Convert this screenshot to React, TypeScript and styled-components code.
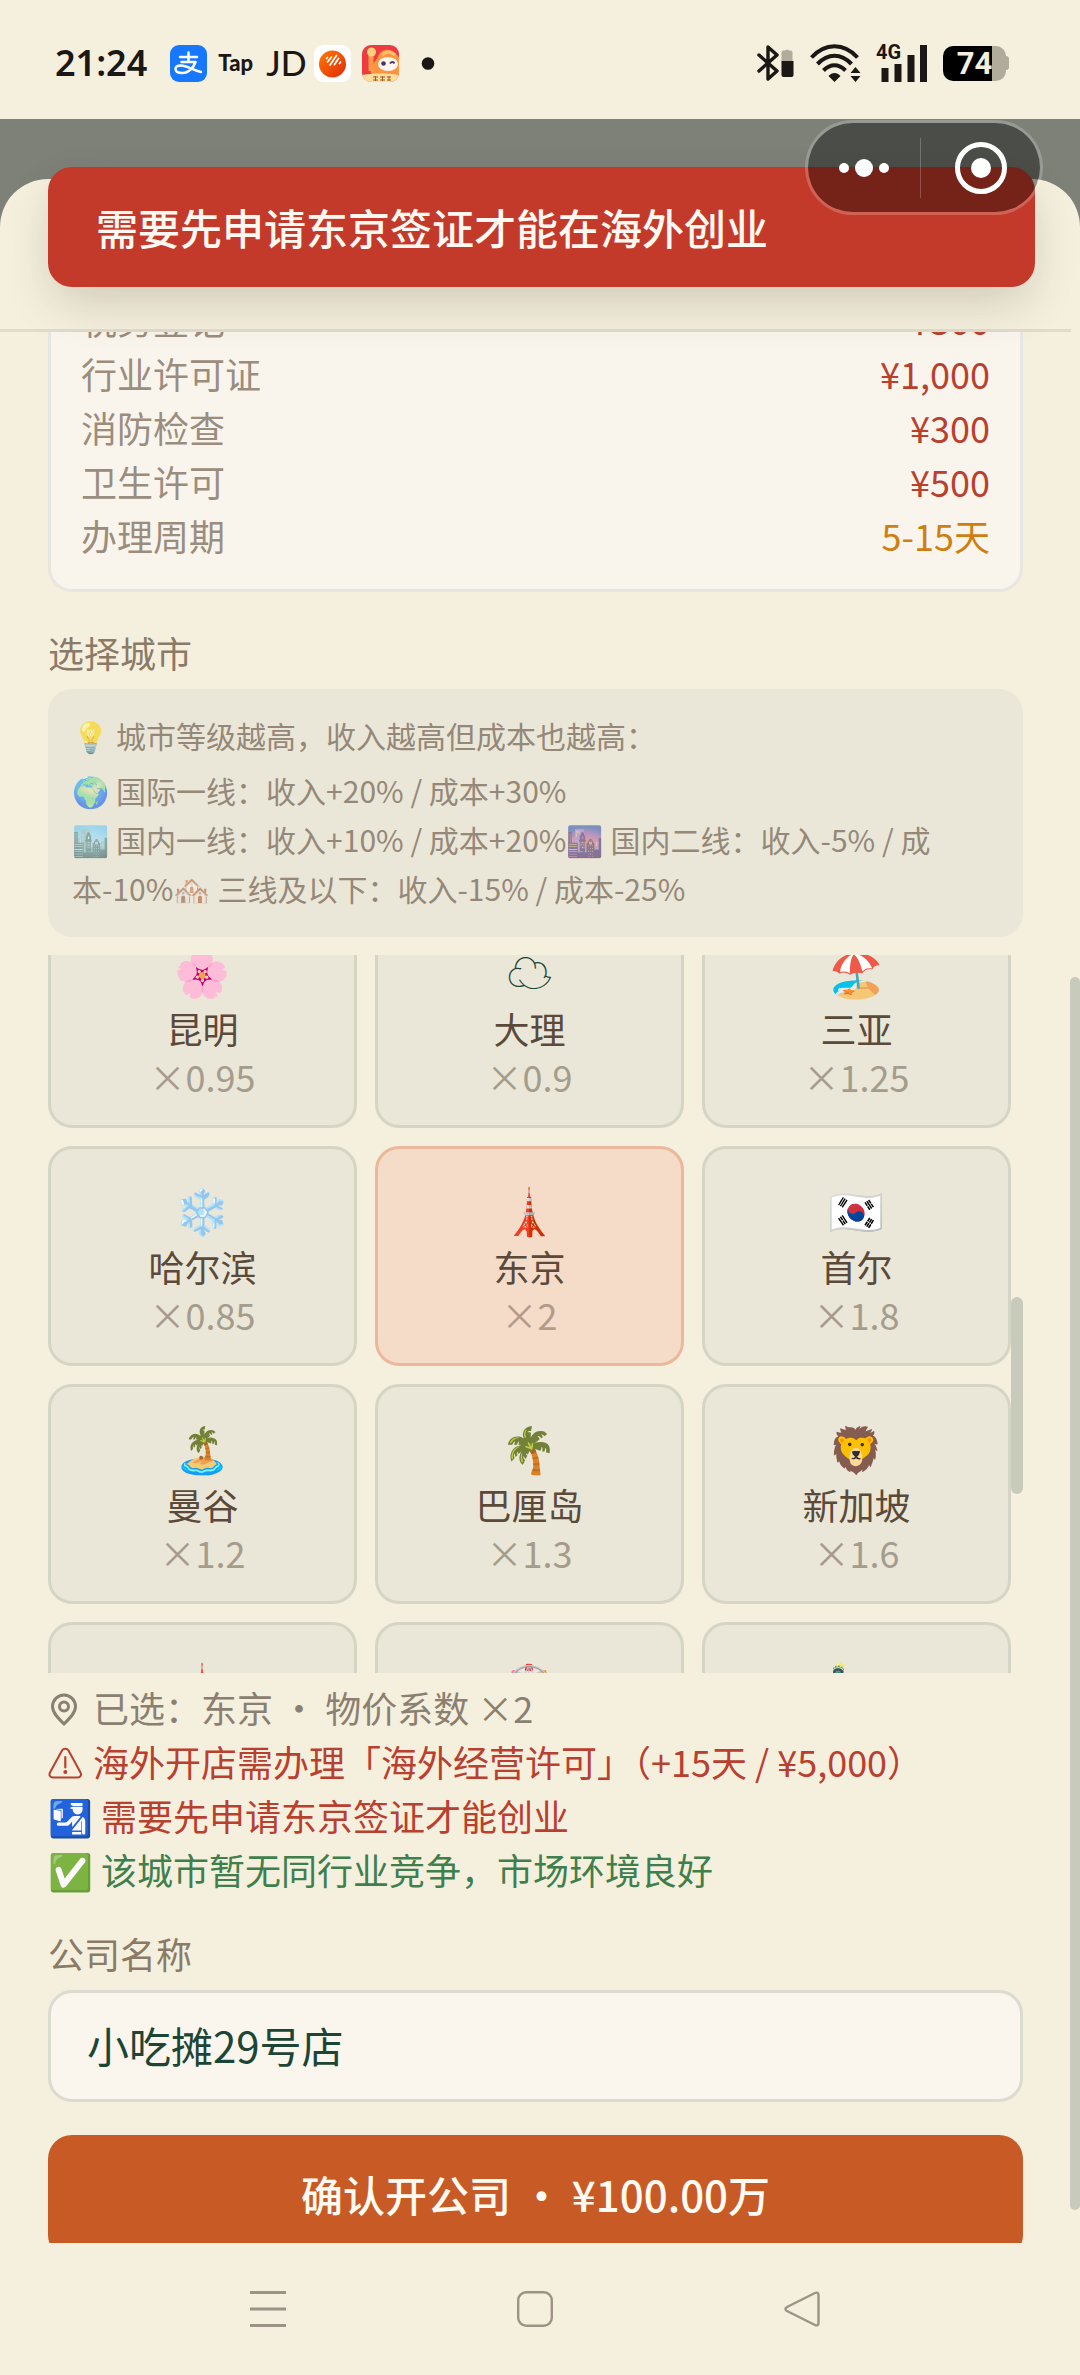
import React, { useState } from "react";
import styled, { createGlobalStyle } from "styled-components";

const Global = createGlobalStyle`
  *, *::before, *::after { box-sizing: border-box; }
  body {
    margin: 0;
    background: #f5efde;
    font-family: "Noto Sans CJK SC", "Noto Color Emoji", sans-serif;
    font-size: 36px;
  }
  button, input { font: inherit; }
`;

const Screen = styled.div`
  display: flex;
  flex-direction: column;
  height: 100vh;
  overflow: hidden;
`;

/* ---------- system bars ---------- */

const StatusBar = styled.header`
  flex: none;
  display: flex;
  align-items: center;
  justify-content: space-between;
  height: 119px;
  padding: 7px 71px 0 55px;
  color: #1a1714;
`;

const StatusGroup = styled.div<{ $gap: number }>`
  display: flex;
  align-items: center;
  gap: ${(p) => p.$gap}px;
`;

const Clock = styled.time`
  margin-right: 12px;
  font-family: "Noto Sans", sans-serif;
  font-weight: 600;
  font-size: 36px;
  line-height: 40px;
`;

const TapMark = styled.span`
  width: 37px;
  font-family: Lato, sans-serif;
  font-weight: 900;
  font-size: 22px;
  line-height: 36px;
`;

const JdMark = styled.span`
  width: 37px;
  font-family: Lato, sans-serif;
  font-weight: 500;
  font-size: 34px;
  line-height: 36px;
`;

const NavBar = styled.nav`
  flex: none;
  display: flex;
  align-items: center;
  justify-content: space-around;
  height: 132px;
  padding: 0 145px 0 134px;
`;

const NavButton = styled.button`
  display: flex;
  padding: 10px;
  border: 0;
  background: none;
  color: #9c9285;
`;

/* ---------- sheet ---------- */

const Stage = styled.div`
  position: relative;
  flex: 1;
  min-height: 0;
  display: flex;
  flex-direction: column;
  padding-top: 60px;
  background: #7e8178;
`;

const Sheet = styled.main`
  position: relative;
  flex: 1;
  min-height: 0;
  display: flex;
  flex-direction: column;
  border-radius: 48px 48px 0 0;
  background: #f5efde;
  overflow: hidden;
`;

const SheetHeader = styled.div`
  flex: none;
  height: 153px;
  margin-right: 9px;
  border-bottom: 3px solid #dfdccd;
`;

const SheetBody = styled.div`
  flex: 1;
  min-height: 0;
  padding: 0 57px 0 48px;
  overflow: hidden;
`;

const Thumb = styled.div<{ $top: number; $height: number; $width: number }>`
  position: absolute;
  right: 0;
  top: ${(p) => p.$top}px;
  width: ${(p) => p.$width}px;
  height: ${(p) => p.$height}px;
  border-radius: 6px;
  background: #c8cbbc;
`;

const Toast = styled.div`
  position: absolute;
  top: 48px;
  left: 48px;
  right: 45px;
  padding: 30px 48px;
  border-radius: 24px;
  background: #c33a2b;
  box-shadow: 0 20px 48px -6px rgba(60, 50, 30, 0.2);
  color: #fff8f0;
  font-size: 42px;
  font-weight: 500;
  line-height: 60px;
`;

const Capsule = styled.div`
  position: absolute;
  top: 1px;
  right: 37px;
  display: flex;
  align-items: center;
  width: 238px;
  height: 95px;
  border: 3px solid rgba(255, 255, 255, 0.2);
  border-radius: 48px;
  background: rgba(0, 0, 0, 0.4);
  background-clip: padding-box;
`;

const CapsuleButton = styled.button<{ $width: number }>`
  flex: none;
  display: flex;
  align-items: center;
  justify-content: center;
  width: ${(p) => p.$width}px;
  height: 100%;
  padding: 0;
  border: 0;
  background: none;
  color: #ffffff;
`;

const CapsuleRule = styled.span`
  width: 3px;
  height: 60px;
  background: rgba(255, 255, 255, 0.22);
`;

/* ---------- fees ---------- */

const FeeCard = styled.dl`
  margin: -40px 0 36px;
  padding: 0 30px 27px;
  border: 3px solid #e7e6e0;
  border-top: 0;
  border-radius: 0 0 24px 24px;
  background: #faf5ec;
`;

const FeeRow = styled.div`
  display: flex;
  justify-content: space-between;
  line-height: 54px;
`;

const FeeName = styled.dt`
  color: #9b8d7e;
`;

const FeeValue = styled.dd<{ $warn?: boolean }>`
  margin: 0;
  color: ${(p) => (p.$warn ? "#cf7f12" : "#b9402f")};
`;

/* ---------- city picker ---------- */

const Label = styled.label`
  display: block;
  margin-bottom: 12px;
  color: #8a7a66;
  line-height: 49px;
`;

const Heading = styled(Label).attrs({ as: "h2" })`
  margin-top: 0;
  font-size: 36px;
  font-weight: 400;
`;

const Info = styled.section`
  margin-bottom: 18px;
  padding: 22px 24px 24px;
  border-radius: 24px;
  background: #eae7d8;
  color: #968878;
  font-size: 30px;
  line-height: 49px;
`;

const InfoTitle = styled.p`
  margin: 0 0 6px;
`;

const InfoText = styled.p`
  margin: 0;
`;

const Faded = styled.span`
  opacity: 0.6;
`;

const CityWindow = styled.div`
  position: relative;
  height: 718px;
  padding-right: 12px;
  overflow: hidden;
`;

const CityGrid = styled.div`
  display: grid;
  grid-template-columns: repeat(3, 1fr);
  gap: 18px;
  margin-top: -47px;
`;

const CityTile = styled.button<{ $selected: boolean }>`
  display: flex;
  flex-direction: column;
  align-items: center;
  padding: 30px 0 28px;
  border: 3px solid ${(p) => (p.$selected ? "#ecb89c" : "#d5d5c6")};
  border-radius: 24px;
  background: ${(p) => (p.$selected ? "#f4dcc9" : "#eae7d8")};
`;

const CityEmoji = styled.span`
  height: 60px;
  color: #1d4536;
  font-size: 45px;
  line-height: 60px;
`;

const CityName = styled.span`
  color: #5b4a3a;
  line-height: 54px;
`;

const CityRate = styled.span<{ $selected: boolean }>`
  color: ${(p) => (p.$selected ? "#b39b8a" : "#a59c8c")};
  line-height: 42px;
`;

/* ---------- notes and form ---------- */

const Notes = styled.ul`
  margin: 7px 0 33px;
  padding: 0;
  list-style: none;
`;

const Note = styled.li<{ $color: string }>`
  display: flex;
  align-items: center;
  gap: 9px;
  height: 54px;
  color: ${(p) => p.$color};
  line-height: 54px;
  white-space: pre;

  svg { margin-top: 5px; }
`;

const NameInput = styled.input`
  display: block;
  width: 100%;
  height: 112px;
  margin-bottom: 33px;
  padding: 0 36px 3px;
  border: 3px solid #dcdbd0;
  border-radius: 24px;
  outline: 0;
  background: #faf6ee;
  color: #1d4536;
  font-size: 42px;
`;

const Confirm = styled.button`
  display: block;
  width: 100%;
  height: 124px;
  padding: 0 0 8px;
  border: 0;
  border-radius: 24px;
  background: #c75a25;
  color: #fffaf2;
  font-size: 42px;
  font-weight: 500;
`;

type Fee = { name: string; value: string; warn?: boolean };

const fees: Fee[] = [
  { name: "税务登记", value: "¥300" },
  { name: "行业许可证", value: "¥1,000" },
  { name: "消防检查", value: "¥300" },
  { name: "卫生许可", value: "¥500" },
  { name: "办理周期", value: "5-15天", warn: true },
];

type City = { emoji: string; name: string; rate: string };

const cities: City[] = [
  { emoji: "🌸", name: "昆明", rate: "0.95" },
  { emoji: "☁", name: "大理", rate: "0.9" },
  { emoji: "🏖️", name: "三亚", rate: "1.25" },
  { emoji: "❄️", name: "哈尔滨", rate: "0.85" },
  { emoji: "🗼", name: "东京", rate: "2" },
  { emoji: "🇰🇷", name: "首尔", rate: "1.8" },
  { emoji: "🏝️", name: "曼谷", rate: "1.2" },
  { emoji: "🌴", name: "巴厘岛", rate: "1.3" },
  { emoji: "🦁", name: "新加坡", rate: "1.6" },
  { emoji: "🗼", name: "巴黎", rate: "2" },
  { emoji: "🎡", name: "伦敦", rate: "2.2" },
  { emoji: "🗽", name: "纽约", rate: "2.5" },
];

const AlipayIcon = () => (
  <svg width="37" height="37" viewBox="0 0 37 37" aria-hidden="true">
    <rect width="37" height="37" rx="9" fill="#1677ff" />
    <g fill="none" stroke="#fff" strokeLinecap="round" strokeLinejoin="round">
      <path d="M10 12h17M18.500 7.500v9M11.500 17h14c-1.500 4.500-6 11-13 11-4 0-7-1.300-7-4 0-2.300 2.300-3.500 5.500-3.500 6 0 12 5 20 6.500" strokeWidth="2.500" />
    </g>
  </svg>
);

const VoiceIcon = () => (
  <svg width="37" height="37" viewBox="0 0 37 37" aria-hidden="true">
    <defs>
      <linearGradient id="voice" x1="0" y1="0" x2="1" y2="1">
        <stop offset="0" stopColor="#ff7a00" />
        <stop offset="1" stopColor="#e02a0c" />
      </linearGradient>
    </defs>
    <rect width="37" height="37" rx="9" fill="#fff" />
    <circle cx="18.500" cy="19" r="13.500" fill="url(#voice)" />
    <path d="M12.500 13.500l1-1M13.500 17l4-5M16 20l6.500-9.500M20.500 19.500l4-6M25.500 18.500l1-1.500" stroke="#fff" strokeWidth="1.700" strokeLinecap="round" />
  </svg>
);

const ComicIcon = () => (
  <svg width="37" height="37" viewBox="0 0 37 37" aria-hidden="true">
    <defs>
      <clipPath id="comic"><rect width="37" height="37" rx="9" /></clipPath>
    </defs>
    <g clipPath="url(#comic)">
      <rect width="37" height="37" fill="#ee3b40" />
      <path d="M16 12c2-8 12-10 18-3l4 4v18H10c-3-5-1-9 6-19z" fill="#ff9440" />
      <path d="M20 10c4-4 9-4 13 0" fill="none" stroke="#ffc06a" strokeWidth="3" />
      <path d="M9 11v15" stroke="#ff9a4a" strokeWidth="5" />
      <circle cx="9.500" cy="7" r="4.500" fill="#ffd07a" />
      <ellipse cx="26" cy="19" rx="10" ry="7" fill="#fff6ee" />
      <circle cx="21.500" cy="18.500" r="2.300" fill="#4a3560" />
      <path d="M28 18.500c1.500-2 3.500-2 4.500 0" fill="none" stroke="#4a3560" strokeWidth="1.800" />
      <path d="M0 30c11-2 26-2 37 0v7H0z" fill="#ffdd9c" />
      <path d="M11 32h5M11 35h5M13.500 31v5M18 32h5M18 35h5M20.500 31v5M25 32h4M25 35h4M27 31v5" stroke="#a65a2c" strokeWidth="1" />
    </g>
  </svg>
);

const BluetoothIcon = () => (
  <svg width="38" height="38" viewBox="0 0 38 38" aria-hidden="true">
    <path d="M2 11l18 16-9 8V3l9 8L2 27" fill="none" stroke="#1a1714" strokeWidth="3.400" strokeLinejoin="round" strokeLinecap="round" />
    <path d="M24.500 17V8.500a2 2 0 0 1 2-2h1.500a3 3 0 0 1 4 0h1.500a2 2 0 0 1 2 2V17z" fill="#b1ab9c" />
    <path d="M24.500 17h12v14a2 2 0 0 1-2 2h-8a2 2 0 0 1-2-2z" fill="#1a1714" />
  </svg>
);

const WifiIcon = () => (
  <svg width="51" height="38" viewBox="0 0 51 38" aria-hidden="true">
    <g fill="none" stroke="#1a1714" strokeWidth="4">
      <path d="M1.500 13.500C15-1.500 34-1.500 47.500 13.500" />
      <path d="M7.500 20C18 9 31 9 41.500 20" />
      <path d="M13.500 26.500C20.500 19.500 28.500 19.500 35.500 26.500" />
    </g>
    <path d="M18.500 32c3.500-4 8.500-4 12 0l-6 6z" fill="#1a1714" />
    <path d="M40.500 29l5-6 5 6zM40.500 32h10l-5 6z" fill="#1a1714" />
  </svg>
);

const Cell = styled.span`
  display: grid;
`;

const CellTag = styled.span`
  grid-area: 1 / 1;
  align-self: start;
  font-family: Roboto, sans-serif;
  font-size: 20px;
  font-weight: 700;
  line-height: 16px;
`;

const CellBars = styled.svg`
  grid-area: 1 / 1;
`;

const Battery = styled.span`
  display: flex;
  align-items: center;
`;

const BatteryCell = styled.span`
  width: 63px;
  height: 35px;
  border-radius: 10px;
  background: linear-gradient(90deg, #000000 49px, #b1ab9c 49px);
  color: #f5efde;
  font-family: Roboto, sans-serif;
  font-size: 31px;
  font-weight: 700;
  line-height: 36px;
  text-align: center;
`;

const BatteryTip = styled.span`
  width: 3px;
  height: 14px;
  border-radius: 0 3px 3px 0;
  background: #b1ab9c;
`;

const PinIcon = () => (
  <svg width="36" height="36" viewBox="0 0 36 36" aria-hidden="true">
    <g fill="none" stroke="currentColor" strokeWidth="3">
      <path d="M16 32C10 26 4.500 20.500 4.500 14.500a11.500 11.500 0 0 1 23 0C27.500 20.500 22 26 16 32z" />
      <circle cx="16" cy="14.500" r="4.500" />
    </g>
  </svg>
);

const AlertIcon = () => (
  <svg width="36" height="36" viewBox="0 0 36 36" aria-hidden="true">
    <path d="M14 4.500c1.500-2.500 5-2.500 6.500 0l12 22c1.300 2.500 0 5-3 5H5c-3 0-4.300-2.500-3-5z" fill="none" stroke="currentColor" strokeWidth="2" />
    <path d="M17.300 11v10.500" stroke="currentColor" strokeWidth="2.200" strokeLinecap="round" />
    <circle cx="17.300" cy="26" r="2" fill="currentColor" />
  </svg>
);

export default function App() {
  const [selected, setSelected] = useState("东京");
  const [company, setCompany] = useState("小吃摊29号店");

  return (
    <Screen>
      <Global />
      <StatusBar>
        <StatusGroup $gap={11}>
          <Clock>21:24</Clock>
          <AlipayIcon />
          <TapMark>Tap</TapMark>
          <JdMark>JD</JdMark>
          <VoiceIcon />
          <ComicIcon />
          <svg width="36" height="13" viewBox="0 0 36 13" aria-hidden="true">
            <circle cx="18" cy="6.500" r="6.300" fill="#1a1714" />
          </svg>
        </StatusGroup>
        <StatusGroup $gap={15}>
          <BluetoothIcon />
          <WifiIcon />
          <Cell>
            <CellTag>4G</CellTag>
            <CellBars width="52" height="38" viewBox="0 0 52 38" aria-hidden="true">
              <path d="M9 38V24M22 38V20M35 38V11M47.500 38V1" stroke="#1a1714" strokeWidth="7" />
            </CellBars>
          </Cell>
          <Battery>
            <BatteryCell>74</BatteryCell>
            <BatteryTip />
          </Battery>
        </StatusGroup>
      </StatusBar>

      <Stage>
        <Sheet>
          <SheetHeader />
          <SheetBody>
            <FeeCard>
              {fees.map((fee) => (
                <FeeRow key={fee.name}>
                  <FeeName>{fee.name}</FeeName>
                  <FeeValue $warn={fee.warn}>{fee.value}</FeeValue>
                </FeeRow>
              ))}
            </FeeCard>

            <Heading>选择城市</Heading>
            <Info>
              <InfoTitle>
                <Faded>💡</Faded> 城市等级越高，收入越高但成本也越高：
              </InfoTitle>
              <InfoText>
                <Faded>🌍</Faded> 国际一线：收入+20% / 成本+30%
                <br />
                <Faded>🏙️</Faded> 国内一线：收入+10% / 成本+20%
                <Faded>🌆</Faded> 国内二线：收入-5% / 成本-10%
                <Faded>🏘️</Faded> 三线及以下：收入-15% / 成本-25%
              </InfoText>
            </Info>

            <CityWindow>
              <CityGrid>
                {cities.map((city) => {
                  const on = city.name === selected;
                  return (
                    <CityTile
                      key={city.name}
                      type="button"
                      $selected={on}
                      aria-pressed={on}
                      onClick={() => setSelected(city.name)}
                    >
                      <CityEmoji>{city.emoji}</CityEmoji>
                      <CityName>{city.name}</CityName>
                      <CityRate $selected={on}>×{city.rate}</CityRate>
                    </CityTile>
                  );
                })}
              </CityGrid>
              <Thumb $top={342} $height={197} $width={12} />
            </CityWindow>

            <Notes>
              <Note $color="#8a7f70">
                <PinIcon />已选：东京 · 物价系数 ×2
              </Note>
              <Note $color="#b9402f">
                <AlertIcon />海外开店需办理「海外经营许可」（+15天 / ¥5,000）
              </Note>
              <Note $color="#b9402f">🛂 需要先申请东京签证才能创业</Note>
              <Note $color="#3f7f4c">✅ 该城市暂无同行业竞争，市场环境良好</Note>
            </Notes>

            <Label htmlFor="company">公司名称</Label>
            <NameInput
              id="company"
              type="text"
              value={company}
              onChange={(e) => setCompany(e.target.value)}
            />
            <Confirm type="button">确认开公司 · ¥100.00万</Confirm>
          </SheetBody>
          <Thumb $top={798} $height={1233} $width={10} />
        </Sheet>

        <Toast role="alert">需要先申请东京签证才能在海外创业</Toast>
        <Capsule>
          <CapsuleButton type="button" aria-label="更多" $width={112}>
            <svg width="50" height="18" viewBox="0 0 50 18" aria-hidden="true">
              <g fill="currentColor">
                <circle cx="5" cy="9" r="5" />
                <circle cx="25" cy="9" r="9" />
                <circle cx="45" cy="9" r="5" />
              </g>
            </svg>
          </CapsuleButton>
          <CapsuleRule />
          <CapsuleButton type="button" aria-label="关闭" $width={119}>
            <svg width="52" height="52" viewBox="0 0 52 52" aria-hidden="true">
              <circle cx="26" cy="26" r="23.500" fill="none" stroke="currentColor" strokeWidth="5" />
              <circle cx="26" cy="26" r="10" fill="currentColor" />
            </svg>
          </CapsuleButton>
        </Capsule>
      </Stage>

      <NavBar>
        <NavButton type="button" aria-label="最近任务">
          <svg width="36" height="36" viewBox="0 0 36 36" aria-hidden="true">
            <path d="M0 1.500h36M0 18h36M0 34.500h36" stroke="currentColor" strokeWidth="3" />
          </svg>
        </NavButton>
        <NavButton type="button" aria-label="主屏幕">
          <svg width="36" height="36" viewBox="0 0 36 36" aria-hidden="true">
            <rect x="1.200" y="1.200" width="33.600" height="33.600" rx="8" fill="none" stroke="currentColor" strokeWidth="2.400" />
          </svg>
        </NavButton>
        <NavButton type="button" aria-label="返回">
          <svg width="36" height="36" viewBox="0 0 36 36" aria-hidden="true">
            <path d="M31 2L3 16c-2 1-2 3 0 4l28 14c2 1 3.500 0 3.500-2V4c0-2-1.500-3-3.500-2z" fill="none" stroke="currentColor" strokeWidth="2.400" />
          </svg>
        </NavButton>
      </NavBar>
    </Screen>
  );
}
